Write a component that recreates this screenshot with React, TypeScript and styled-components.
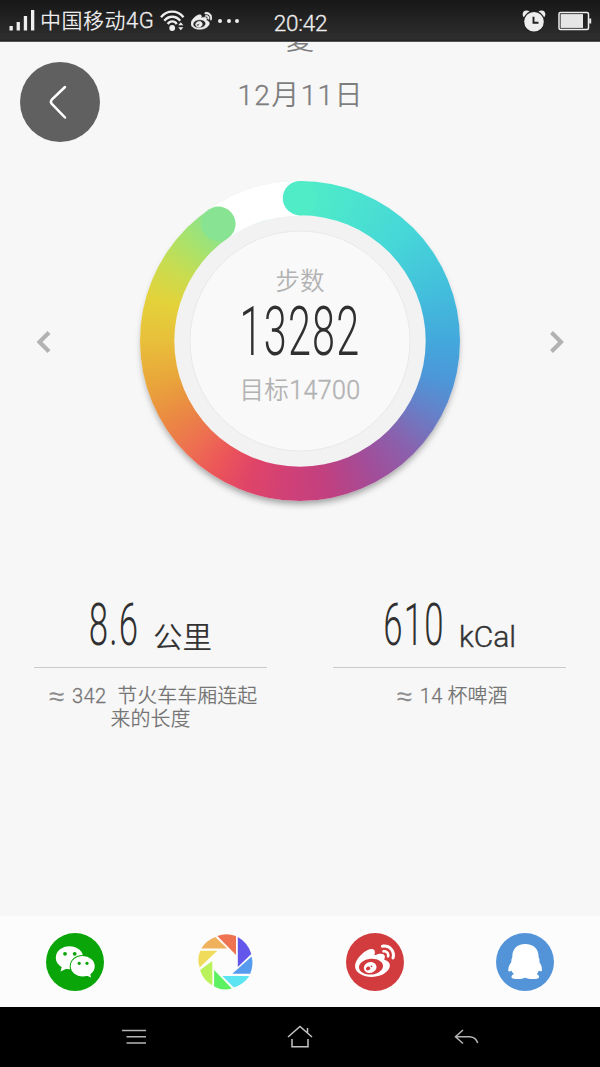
import React from 'react';
import styled, { createGlobalStyle } from 'styled-components';
import { FaWeibo } from 'react-icons/fa';

const sans = `Roboto, "Noto Sans CJK SC", sans-serif`;

const GlobalStyle = createGlobalStyle`
  * { box-sizing: border-box; }
  html, body { margin: 0; padding: 0; }
  body { background: #f7f7f7; font-family: ${sans}; }
  svg { display: block; }
`;

const Screen = styled.div`
  width: 600px;
  height: 1067px;
  display: flex;
  flex-direction: column;
  overflow: hidden;
  background: #f7f7f7;
`;

const StatusBar = styled.header`
  flex: none;
  height: 42px;
  display: grid;
  grid-template-columns: 1fr auto 1fr;
  align-items: center;
  padding: 0 8px 0 9px;
  background: linear-gradient(#171717, #2e2e2e 39px, #202020 41px, #8a8a8a 42px);
  color: #eee;
`;

const StatusGroup = styled.div<{ $end?: boolean; $gap: number }>`
  display: flex;
  align-items: center;
  justify-content: ${(p) => (p.$end ? 'flex-end' : 'flex-start')};
  gap: ${(p) => p.$gap}px;
`;

const Latin = styled.span<{ $size: number; $stroke: number }>`
  font-size: ${(p) => p.$size}px;
  font-weight: 300;
  -webkit-text-stroke: ${(p) => p.$stroke}px currentColor;
`;

const Carrier = styled.span`
  width: 115px;
  margin: 0 -1px 0 -1px;
  font-size: 21px;
  line-height: 40px;
  font-weight: 350;
  letter-spacing: 0.5px;
  white-space: nowrap;
`;

const Clock = styled.span`
  padding-top: 3px;
  font-size: 22.5px;
  font-weight: 300;
  -webkit-text-stroke: 0.3px currentColor;
  line-height: 38px;
  letter-spacing: -0.2px;
`;

const Dots = styled.div`
  display: flex;
  gap: 4.5px;
  i { width: 4px; height: 4px; border-radius: 50%; background: #eee; }
`;

const Content = styled.main`
  flex: none;
  height: 874px;
  overflow: hidden;
  display: flex;
  flex-direction: column;
`;

const Top = styled.div`
  display: grid;
  grid-template-columns: 1fr auto 1fr;
  height: 138px;
  padding: 0 20px;
`;

const BackButton = styled.button`
  width: 80px;
  height: 80px;
  margin-top: 20px;
  padding: 0;
  border: 0;
  border-radius: 50%;
  background: #606060;
`;

const Heading = styled.div`
  display: flex;
  flex-direction: column;
  align-items: center;
  margin-top: -15px;
  color: #7e7e7e;
  font-weight: 350;
`;

const Title = styled.div`
  font-size: 28px;
  line-height: 28px;
`;

const DateLabel = styled.div`
  margin-top: 25px;
  font-size: 28px;
  line-height: 32px;
  letter-spacing: 1.4px;
  margin-right: -1.4px;
`;

const Carousel = styled.section`
  display: flex;
  align-items: center;
  justify-content: space-between;
  height: 321px;
  padding: 0 35px;
`;

const Ring = styled.div`
  display: grid;
  width: 320px;
  height: 320px;
  border-radius: 50%;
  background: conic-gradient(
    #50ecc8 0deg, #4be4ce 20deg, #46d6d8 45deg, #43bedc 70deg, #43a8dc 90deg,
    #4c97d8 105deg, #6680c8 119deg, #8a61ad 135deg, #a34c98 152deg, #c2407f 170deg,
    #cd4079 182deg, #df4468 200deg, #ec5559 213deg, #ed7150 226deg, #ea8b42 240deg,
    #e9a63a 254deg, #e8bf3a 270deg, #e3d23a 286deg, #c8dc50 300deg, #a8e26c 312deg, #88e392 325deg, #50ecc8 360deg
  );
  box-shadow: 0 5px 7px -2px rgba(0, 0, 0, 0.38);
  > * { grid-area: 1 / 1; }
`;

const Readout = styled.div`
  z-index: 1;
  display: flex;
  flex-direction: column;
  align-items: center;
  padding-top: 86px;
  color: #b2b2b2;
  font-weight: 350;
`;

const ReadoutLabel = styled.div`
  font-size: 24.5px;
  line-height: 30px;
`;

const GoalLabel = styled.div`
  margin-top: 17px;
  font-size: 24.5px;
  line-height: 30px;
  letter-spacing: 0.4px;
`;

const Digits = styled.span<{ $size: number; $squeeze: number; $width: number }>`
  display: flex;
  justify-content: center;
  width: ${(p) => p.$width}px;
  font-family: Roboto, sans-serif;
  font-weight: 300;
  font-size: ${(p) => p.$size}px;
  line-height: 0.8;
  letter-spacing: 2px;
  color: #303030;
  white-space: nowrap;
  transform: scaleX(${(p) => p.$squeeze});
`;

const StepsLine = styled.div`
  display: flex;
  justify-content: center;
  margin-top: 7px;
`;

const Stats = styled.section`
  display: flex;
  justify-content: space-between;
  padding: 97px 34px 0 34px;
`;

const Stat = styled.div`
  width: 233px;
`;

const StatValue = styled.div`
  display: flex;
  align-items: flex-end;
  justify-content: center;
  height: 70px;
  padding-bottom: 18px;
  border-bottom: 1px solid #cacaca;
  color: #333;
`;

const Unit = styled.span<{ $drop: number }>`
  margin: 0 0 -${(p) => p.$drop}px 14px;
  font-size: 29.5px;
  line-height: 34px;
  font-weight: 350;
`;

const StatNote = styled.p`
  margin: 17px -12px 0 -7px;
  text-align: center;
  font-size: 20px;
  line-height: 23px;
  font-weight: 350;
  color: #757575;
`;

const NoteTail = styled.span`
  margin-right: 5px;
`;

const Approx = styled.span`
  margin-right: 3px;
  font-family: "Liberation Sans", sans-serif;
  font-size: 28px;
  line-height: 0;
  vertical-align: -3px;
  color: #8c8c8c;
`;

const Amount = styled.span<{ $after: number }>`
  margin-right: ${(p) => p.$after}px;
  letter-spacing: 0.4px;
  font-weight: 300;
  -webkit-text-stroke: 0.3px currentColor;
`;

const ShareBar = styled.nav`
  flex: none;
  height: 91px;
  display: grid;
  grid-template-columns: repeat(4, 1fr);
  place-items: center;
  background: #fcfcfc;
`;

const ShareButton = styled.button<{ $color: string }>`
  display: grid;
  place-items: center;
  width: 58px;
  height: 58px;
  padding: 0;
  border: 0;
  border-radius: 50%;
  background: ${(p) => p.$color};
  color: #fff;
`;

const NavBar = styled.footer`
  flex: none;
  height: 60px;
  display: flex;
  align-items: center;
  justify-content: space-between;
  padding: 0 120px;
  background: #000;
`;

const Arrow = ({ flip = false }: { flip?: boolean }) => (
  <svg width="17" height="24" viewBox="0 0 17 24" fill="none" stroke="#b2b2b2" strokeWidth="4.2">
    <path d={flip ? 'M3.500 3.500L13 13L3.500 22.500' : 'M14 3.500L4.500 13L14 22.500'} />
  </svg>
);

const Signal = () => (
  <svg width="26" height="22" viewBox="0 0 26 22" fill="#eee">
    <rect x="0.5" y="16" width="3.3" height="4.5" />
    <rect x="7.6" y="12" width="3.3" height="8.5" />
    <rect x="14.8" y="6" width="3.3" height="14.5" />
    <rect x="22" y="0" width="3.3" height="20.5" />
  </svg>
);

const Wifi = () => (
  <svg width="25" height="22" viewBox="0 0 25 22" fill="none" stroke="#eee" strokeWidth="2.3">
    <path d="M1 7.2C7-.2 17.500-.2 23.500 7.200" />
    <path d="M4.300 10.700C8.500 5.400 16 5.400 20.200 10.700" />
    <path d="M7.700 14C10 10.500 14.500 10.500 16.800 14" />
    <circle cx="12.200" cy="18" r="2.900" fill="#eee" stroke="none" />
    <path d="M18.200 15.300l2.600-3 2.600 3zM18.200 17.300l2.600 3 2.600-3z" fill="#eee" stroke="none" />
  </svg>
);

const Alarm = () => (
  <svg width="24" height="22" viewBox="0 0 24 22">
    <circle cx="4.500" cy="4.200" r="3.800" fill="#eee" />
    <circle cx="19.500" cy="4.200" r="3.800" fill="#eee" />
    <circle cx="12" cy="11.700" r="11" fill="#212121" />
    <circle cx="12" cy="11.700" r="9.800" fill="#eee" />
    <path d="M11.500 6.700V12.800H16.500" fill="none" stroke="#222" strokeWidth="1.900" />
  </svg>
);

const Battery = () => (
  <svg width="34" height="20" viewBox="0 0 34 20">
    <rect x="1" y="1.500" width="29.500" height="17" rx="1.500" fill="none" stroke="#eee" strokeWidth="1.500" />
    <rect x="2.600" y="3.100" width="22.400" height="13.800" fill="#e6e6e6" />
    <rect x="31.200" y="7.500" width="2" height="5" fill="#eee" />
  </svg>
);

const Dial = () => (
  <svg width="320" height="320" viewBox="-160 -160 320 320">
    <circle r="125.700" fill="#f2f2f2" />
    <path d="M-91.200 -131.700A160.200 160.200 0 0 1 0 -160.200V-125.300A125.300 125.300 0 0 0 -71.300 -103Z" fill="#fff" />
    <circle cx="0" cy="-142.800" r="17.200" fill="#50ecc8" />
    <circle cx="-81.600" cy="-117.200" r="17.200" fill="#88e392" />
    <circle r="110" fill="#f9f9f9" stroke="#e9e9e9" />
  </svg>
);

const WeChat = () => (
  <svg width="58" height="58" viewBox="0 0 58 58" fill="#fff">
    <path d="M16 33L14.500 38.500L22 35Z" />
    <ellipse cx="23.500" cy="24.700" rx="13.700" ry="11.500" />
    <ellipse cx="36.700" cy="33.300" rx="13" ry="11.300" fill="#09a509" />
    <ellipse cx="36.700" cy="33.300" rx="12" ry="10.300" />
    <path d="M40 42.300L45 44.500L44 39.500Z" />
    <g fill="#09a509">
      <circle cx="19" cy="20.800" r="1.900" />
      <circle cx="28.700" cy="20.800" r="1.900" />
      <circle cx="33.200" cy="30.300" r="1.600" />
      <circle cx="41" cy="30.300" r="1.600" />
    </g>
  </svg>
);

const Aperture = () => (
  <svg width="58" height="58" viewBox="-0.800 0.400 58 58">
    <path fill="#ef7350" d="M20.500 3.500Q29 0 39.200 3.500V22.500Z" />
    <path fill="#6257ea" d="M41 4.500Q51 10 54.500 21.500L41 34.500Z" />
    <path fill="#579bee" d="M54.800 24Q57 32 53.500 41.200H35.500Z" />
    <path fill="#5ce4f2" d="M52.500 43.500Q47 52 37 55L25.500 43.500Z" />
    <path fill="#5cf160" d="M17.300 37.500L35 55.800Q25 58.500 17.300 54Z" />
    <path fill="#b9f25a" d="M15.500 28.500V53Q6 47 3.300 37.500Z" />
    <path fill="#f0dc5a" d="M3.500 18.200H20.500L2.800 34.800Q0 26 3.500 18.200Z" />
    <path fill="#f0b15c" d="M4.500 16Q9 8 18.500 4.300L30.500 16Z" />
  </svg>
);

const Penguin = () => (
  <svg width="58" height="58" viewBox="0 0 58 58" fill="#fff">
    <path d="M29.200 11C38 11 43 16.500 42.600 24.500Q44 26.500 43.300 28.800Q46.500 33.500 45.800 38Q44 38.800 42.800 37.500Q42.500 39 40.800 41Q43.600 42.500 43 44.500C42 46.500 33 46.500 29.200 44.800C25.500 46.500 17 46.500 15.500 44.500Q15 42.500 17.900 41Q16 39 15.300 37.500Q14 39 12.300 38Q11.800 33.500 15.400 28.800Q15 26.500 16.300 24.500C16 16.500 20.500 11 29.200 11Z" />
  </svg>
);

export default function App() {
  return (
    <Screen>
      <GlobalStyle />
      <StatusBar>
        <StatusGroup $gap={6}>
          <Signal />
          <Carrier>中国移动<Latin $size={22} $stroke={0.3}>4G</Latin></Carrier>
          <Wifi />
          <FaWeibo size={21} stroke="#eee" strokeWidth={14} />
          <Dots><i /><i /><i /></Dots>
        </StatusGroup>
        <Clock>20:42</Clock>
        <StatusGroup $end $gap={12}>
          <Alarm />
          <Battery />
        </StatusGroup>
      </StatusBar>

      <Content>
        <Top>
          <BackButton aria-label="返回">
            <svg width="80" height="80" viewBox="0 0 80 80" fill="none" stroke="#fff" strokeWidth="2.500" strokeLinecap="round">
              <path d="M45 25L31.800 37.700Q30 39.800 31.800 41.800L45 55.500" />
            </svg>
          </BackButton>
          <Heading>
            <Title>夏</Title>
            <DateLabel>
              <Latin $size={28} $stroke={0.35}>12</Latin>月<Latin $size={28} $stroke={0.35}>11</Latin>日
            </DateLabel>
          </Heading>
        </Top>

        <Carousel>
          <Arrow />
          <Ring>
            <Dial />
            <Readout>
              <ReadoutLabel>步数</ReadoutLabel>
              <StepsLine>
                <Digits $size={69} $squeeze={0.6} $width={120}>13282</Digits>
              </StepsLine>
              <GoalLabel>目标<Latin $size={25} $stroke={0.4}>14700</Latin></GoalLabel>
            </Readout>
          </Ring>
          <Arrow flip />
        </Carousel>

        <Stats>
          <Stat>
            <StatValue>
              <Digits $size={60} $squeeze={0.58} $width={50}>8.6</Digits>
              <Unit $drop={6}>公里</Unit>
            </StatValue>
            <StatNote>
              <Approx>≈</Approx> <Amount $after={6}>342</Amount> 节火车车厢连起
              <br />
              <NoteTail>来的长度</NoteTail>
            </StatNote>
          </Stat>
          <Stat>
            <StatValue>
              <Digits $size={60} $squeeze={0.58} $width={62}>610</Digits>
              <Unit $drop={5}><Latin $size={30} $stroke={0.4}>kCal</Latin></Unit>
            </StatValue>
            <StatNote>
              <Approx>≈</Approx> <Amount $after={0}>14</Amount> 杯啤酒
            </StatNote>
          </Stat>
        </Stats>
      </Content>

      <ShareBar>
        <ShareButton $color="#09a509" aria-label="微信"><WeChat /></ShareButton>
        <ShareButton $color="transparent" aria-label="朋友圈"><Aperture /></ShareButton>
        <ShareButton $color="#d23c3e" aria-label="微博"><FaWeibo size={40} /></ShareButton>
        <ShareButton $color="#5394d8" aria-label="QQ"><Penguin /></ShareButton>
      </ShareBar>

      <NavBar>
        <svg width="28" height="24" viewBox="0 0 28 24" stroke="#b5b5b5" strokeWidth="1.500">
          <path d="M2 5.500H26M6.500 11.700H26M6.500 18H26" />
        </svg>
        <svg width="28" height="26" viewBox="0 0 28 26" fill="none" stroke="#c4c4c4" strokeWidth="1.500">
          <path d="M2 13L14 2.500L26 13M21.500 8.500V4M6 15V22.700H22V15" />
        </svg>
        <svg width="28" height="24" viewBox="0 0 28 24" fill="none" stroke="#b5b5b5" strokeWidth="1.500">
          <path d="M11 5L3.500 11.800L11 18.500M3.500 11.800H18Q24 12.500 25.700 18" />
        </svg>
      </NavBar>
    </Screen>
  );
}
